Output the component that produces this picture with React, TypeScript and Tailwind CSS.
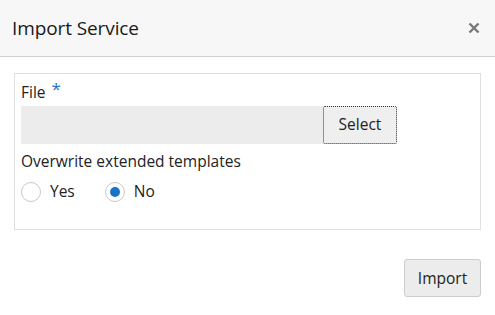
import { useState } from 'react';

const App = () => {
  const [overwrite, setOverwrite] = useState<'yes' | 'no'>('no');

  return (
    <div
      className="w-[495px] h-[315px] bg-white text-[#222] overflow-hidden"
      style={{ fontFamily: '"Open Sans", "Noto Sans", sans-serif' }}
    >
      {/* header */}
      <div className="h-[57px] bg-[#f7f7f7] border-b border-[#cfcfcf] flex items-center justify-between pl-[12px] pr-[14px]">
        <h1 className="text-[19px] text-[#1a1a1a] tracking-[-0.1px]">Import Service</h1>
        <button className="w-[14px] h-[14px] flex items-center justify-center">
          <svg width="12" height="12" viewBox="0 0 12 12">
            <path d="M1.5 1.5 L10.5 10.5 M10.5 1.5 L1.5 10.5" stroke="#777" strokeWidth="2.4" />
          </svg>
        </button>
      </div>

      {/* body */}
      <div className="px-[14px] pt-[16px]">
        <div className="border border-[#e0e0e0] h-[157px] px-[6px] pt-[8px]">
          <div className="flex items-start text-[15.5px] leading-[20px] h-[22px]">
            <span>File</span>
            <span className="text-[#1a73c8] ml-[6px] text-[17px] leading-[14px]">*</span>
          </div>
          <div className="flex h-[38px] mt-[2px]">
            <div className="w-[302px] bg-[#ececec]" />
            <button className="w-[74px] bg-[#efefef] border border-dotted border-[#333] rounded-[2px] text-[15.5px]">
              Select
            </button>
          </div>
          <div className="text-[15.5px] leading-[20px] mt-[7px]">Overwrite extended templates</div>
          <div className="flex items-center gap-[30px] mt-[9px]">
            {[
              { key: 'yes' as const, label: 'Yes' },
              { key: 'no' as const, label: 'No' },
            ].map((opt) => (
              <label
                key={opt.key}
                className="flex items-center gap-[9px] text-[15.5px] cursor-pointer"
                onClick={() => setOverwrite(opt.key)}
              >
                <span className="w-[20px] h-[20px] rounded-full border border-[#c8c8c8] bg-white flex items-center justify-center">
                  {overwrite === opt.key && (
                    <span className="w-[10px] h-[10px] rounded-full bg-[#1a73c8]" />
                  )}
                </span>
                {opt.label}
              </label>
            ))}
          </div>
        </div>
      </div>

      {/* footer */}
      <div className="flex justify-end pr-[14px] mt-[29px]">
        <button className="w-[77px] h-[38px] bg-[#ececec] border border-[#cccccc] rounded-[3px] text-[15.5px] pt-[2px]">
          Import
        </button>
      </div>
    </div>
  );
};

export default App;
